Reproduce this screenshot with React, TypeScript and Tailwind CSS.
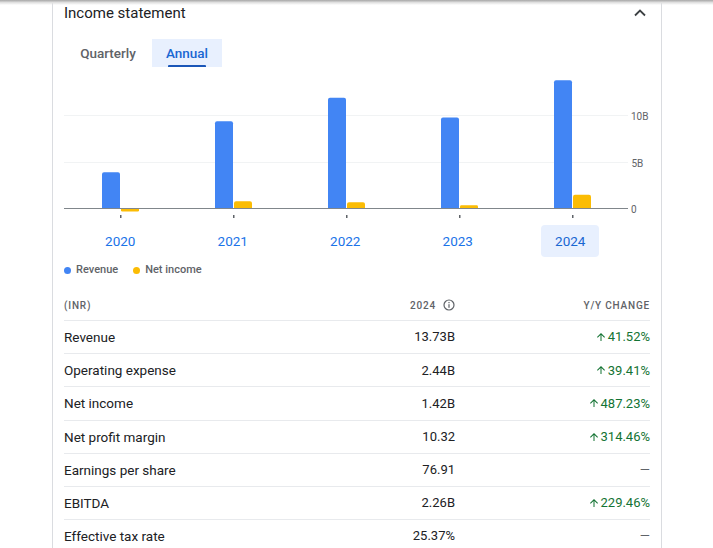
import React from "react";

const groups = [
  { c: 56.5, rev: 3.85, ni: -0.26 },
  { c: 169.5, rev: 9.33, ni: 0.73 },
  { c: 282.5, rev: 11.85, ni: 0.62 },
  { c: 395.5, rev: 9.73, ni: 0.3 },
  { c: 508.5, rev: 13.73, ni: 1.42 },
];

const BASE = 141;
const PX = 9.3;

function barPath(x: number, w: number, v: number) {
  const h = Math.abs(v) * PX;
  const r = Math.min(2, h / 2);
  if (v >= 0) {
    const y = BASE - h;
    return `M${x},${BASE} V${y + r} Q${x},${y} ${x + r},${y} H${x + w - r} Q${x + w},${y} ${x + w},${y + r} V${BASE} Z`;
  }
  const y0 = BASE + 1;
  const y1 = y0 + h;
  return `M${x},${y0} V${y1 - r} Q${x},${y1} ${x + r},${y1} H${x + w - r} Q${x + w},${y1} ${x + w},${y1 - r} V${y0} Z`;
}

function Chart() {
  return (
    <svg width="586" height="158" viewBox="0 0 586 158" className="block">
      <rect x="0" y="48" width="564" height="1" fill="#f1f3f4" />
      <rect x="0" y="95" width="564" height="1" fill="#f1f3f4" />
      {groups.map((g, i) => (
        <g key={i}>
          <path d={barPath(g.c - 18.5, 18, g.rev)} fill="#4285f4" />
          <path d={barPath(g.c + 0.5, 18, g.ni)} fill="#fbbc04" />
          <rect x={g.c - 0.5} y="148" width="1.5" height="3" fill="#5f6368" />
        </g>
      ))}
      <rect x="0" y="141" width="564" height="1" fill="#80868b" />
      <text x="567" y="50.5" dominantBaseline="middle" fontSize="10" fill="#5f6368" fontFamily="Roboto, sans-serif">10B</text>
      <text x="567.5" y="97" dominantBaseline="middle" fontSize="10" fill="#5f6368" fontFamily="Roboto, sans-serif">5B</text>
      <text x="567" y="143.5" dominantBaseline="middle" fontSize="10" fill="#5f6368" fontFamily="Roboto, sans-serif">0</text>
    </svg>
  );
}

function UpArrow() {
  return (
    <svg width="12" height="12" viewBox="0 0 24 24" className="shrink-0">
      <path d="M4 12l1.41 1.41L11 7.83V20h2V7.83l5.58 5.59L20 12l-8-8-8 8z" fill="#137333" />
    </svg>
  );
}

function InfoIcon() {
  return (
    <svg width="12" height="12" viewBox="0 0 12 12" className="shrink-0">
      <circle cx="6" cy="6" r="5" fill="none" stroke="#5f6368" strokeWidth="1.2" />
      <rect x="5.4" y="5.2" width="1.2" height="3.6" fill="#5f6368" />
      <rect x="5.4" y="3" width="1.2" height="1.2" fill="#5f6368" />
    </svg>
  );
}

const rows: { label: string; value: string; change: string | null }[] = [
  { label: "Revenue", value: "13.73B", change: "41.52%" },
  { label: "Operating expense", value: "2.44B", change: "39.41%" },
  { label: "Net income", value: "1.42B", change: "487.23%" },
  { label: "Net profit margin", value: "10.32", change: "314.46%" },
  { label: "Earnings per share", value: "76.91", change: null },
  { label: "EBITDA", value: "2.26B", change: "229.46%" },
  { label: "Effective tax rate", value: "25.37%", change: null },
];

const years = ["2020", "2021", "2022", "2023", "2024"];

export default function App() {
  return (
    <div className="relative w-[713px] h-[548px] overflow-hidden bg-white font-['Roboto',sans-serif] text-[#202124]">
      <div className="ml-[52px] w-[610px] h-full border-x border-[#dadce0] px-[11px]">
        <div className="flex h-[26px] items-center justify-between">
          <span className="text-[15px] leading-[20px] text-[#202124]">Income statement</span>
          <svg width="12" height="8" viewBox="0 0 12 8" className="mr-[4px]">
            <path d="M1 6.5 L6 1.5 L11 6.5" fill="none" stroke="#3c4043" strokeWidth="1.8" />
          </svg>
        </div>

        <div className="mt-[13px] flex h-[28px]">
          <div className="flex w-[88px] items-center justify-center text-[13.5px] font-medium text-[#5f6368]">
            Quarterly
          </div>
          <div className="relative flex w-[70px] items-center justify-center bg-[#e8f0fe] text-[13.5px] font-medium text-[#1967d2]">
            Annual
            <div className="absolute bottom-0 left-[16px] h-[2px] w-[38px] rounded-t-[1px] bg-[#1a56b8]" />
          </div>
        </div>

        <Chart />

        <div className="grid h-[32px] grid-cols-[repeat(5,112.5px)]">
          {years.map((y) => (
            <div key={y} className="flex items-center justify-center">
              <div
                className={
                  y === "2024"
                    ? "flex h-[32px] w-[58px] shrink-0 items-center justify-center rounded-[4px] bg-[#e8f0fe] pt-[1px] text-[13.5px] text-[#1967d2]"
                    : "flex h-[32px] w-[58px] shrink-0 items-center justify-center pt-[1px] text-[13.5px] text-[#1a73e8]"
                }
              >
                {y}
              </div>
            </div>
          ))}
        </div>

        <div className="mt-[3px] flex h-[20px] items-center text-[11px] font-medium text-[#5f6368]">
          <span className="h-[7px] w-[7px] rounded-full bg-[#4285f4]" />
          <span className="ml-[5px]">Revenue</span>
          <span className="ml-[15px] h-[7px] w-[7px] rounded-full bg-[#fbbc04]" />
          <span className="ml-[5px]">Net income</span>
        </div>

        <div className="mt-[10px] grid h-[30px] grid-cols-[1fr_120px_195px] items-center text-[10px] font-medium tracking-[0.8px] text-[#5f6368]">
          <span>(INR)</span>
          <span className="flex items-center justify-end gap-[7px]">
            2024
            <InfoIcon />
          </span>
          <span className="text-right">Y/Y CHANGE</span>
        </div>

        {rows.map((r) => (
          <div
            key={r.label}
            className="grid h-[33.2px] grid-cols-[1fr_120px_195px] items-center border-t border-[#e8eaed]"
          >
            <span className="text-[13.5px] text-[#202124]">{r.label}</span>
            <span className="text-right text-[13px] text-[#202124]">{r.value}</span>
            <span className="flex items-center justify-end text-[13px]">
              {r.change ? (
                <span className="flex items-center gap-[1px] text-[#137333]">
                  <UpArrow />
                  {r.change}
                </span>
              ) : (
                <span className="text-[#5f6368]">—</span>
              )}
            </span>
          </div>
        ))}
      </div>

      <div className="pointer-events-none absolute inset-x-0 top-0 h-[5px] bg-linear-to-b from-[#a6a6a6] via-[#e0e0e0] to-transparent" />
    </div>
  );
}
